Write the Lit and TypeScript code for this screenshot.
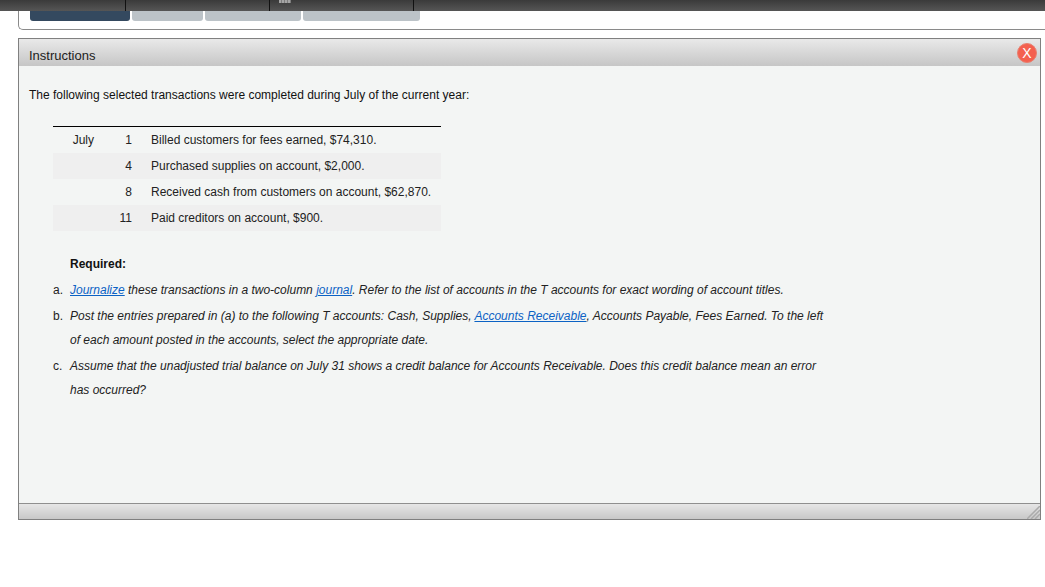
import {css, html, LitElement} from "lit";
import {customElement} from "lit/decorators.js";

const rows = [
    {month: "July", day: "1", text: "Billed customers for fees earned, $74,310."},
    {month: "", day: "4", text: "Purchased supplies on account, $2,000."},
    {month: "", day: "8", text: "Received cash from customers on account, $62,870."},
    {month: "", day: "11", text: "Paid creditors on account, $900."},
];

@customElement("app-root")
class AppRoot extends LitElement {
    static styles = css`
    :host {
        display: block;
        width: 1045px;
        height: 587px;
        overflow: hidden;
        background: #fff;
        font-family: "Liberation Sans", Arial, sans-serif;
        font-size: 12px;
        color: #111;
    }

    .topbar {
        height: 11px;
        display: flex;
        background: linear-gradient(#3a3a3a, #565656);
    }

    .topbar div {
        box-sizing: border-box;
        width: 144px;
        height: 11px;
        border-right: 1px solid #111;
    }

    .topbar .first {
        width: 126px;
    }

    .topbar .calendar {
        padding-left: 9px;
    }

    .cal {
        display: block;
        width: 12px;
        height: 3px;
        background: repeating-linear-gradient(90deg, #a5a5a5 0 2px, #7d7d7d 2px 3px);
    }

    .panel {
        box-sizing: border-box;
        height: 19px;
        margin-left: 18px;
        padding-left: 11px;
        display: flex;
        gap: 2px;
        align-items: flex-start;
        border-left: 1px solid #8a8a8a;
        border-bottom: 1px solid #8a8a8a;
        border-bottom-left-radius: 5px;
    }

    .tab {
        height: 10px;
        background: #bcc3c8;
        border-radius: 0 0 3px 3px;
    }

    .tab.active {
        background: #34495f;
    }

    .dialog {
        box-sizing: border-box;
        width: 1023px;
        height: 482px;
        margin: 8px 0 0 18px;
        border: 1px solid #808080;
        display: flex;
        flex-direction: column;
        background: #f3f5f4;
    }

    .header {
        height: 27px;
        flex: none;
        display: flex;
        align-items: center;
        justify-content: space-between;
        padding: 0 3px 0 10px;
        font-size: 13px;
        color: #1c1c1c;
        background: linear-gradient(#e9e9e9, #c6c6c6);
    }

    .title {
        padding-top: 6px;
    }

    .close {
        box-sizing: border-box;
        width: 20px;
        height: 20px;
        border-radius: 50%;
        background: #f4604f;
        border: 1px solid #e8806f;
        color: #fff;
        font-size: 14px;
        line-height: 18px;
        text-align: center;
    }

    .body {
        flex: 1;
        padding: 22px 0 0 10px;
    }

    .intro {
        margin: 0;
        line-height: 14px;
    }

    table {
        width: 388px;
        margin: 24px 0 0 24px;
        border-collapse: collapse;
        border-top: 1px solid #000;
        color: #222;
    }

    td {
        height: 26px;
        padding: 0;
    }

    tr:nth-child(even) td {
        background: #efefef;
    }

    .month {
        width: 41px;
        text-align: right;
    }

    .day {
        width: 38px;
        text-align: right;
    }

    .text {
        padding-left: 19px;
    }

    .required {
        margin: 20px 0 1px 41px;
        line-height: 26px;
        font-weight: bold;
    }

    .items {
        margin: 0;
        padding: 0;
        list-style: none;
    }

    .items li {
        display: flex;
        width: 805px;
        line-height: 24px;
        margin-bottom: 2px;
    }

    .marker {
        width: 41px;
        flex: none;
        box-sizing: border-box;
        padding-left: 24px;
        color: #222;
    }

    .copy {
        font-style: italic;
        color: #222;
    }

    .copy a {
        color: #0b62c4;
        text-decoration: underline;
    }

    .footer {
        height: 15px;
        flex: none;
        position: relative;
        border-top: 1px solid #8f8f8f;
        background: linear-gradient(#e6e6e6, #c8c8c8);
    }

    .grip {
        position: absolute;
        right: 0;
        bottom: 0;
    }
    `

    render() {
        return html`
            <div class="topbar">
                <div class="first"></div>
                <div></div>
                <div class="calendar"><span class="cal"></span></div>
            </div>
            <div class="panel">
                <div class="tab active" style="width: 100px"></div>
                <div class="tab" style="width: 71px"></div>
                <div class="tab" style="width: 96px"></div>
                <div class="tab" style="width: 117px"></div>
            </div>
            <div class="dialog">
                <div class="header">
                    <span class="title">Instructions</span>
                    <div class="close">X</div>
                </div>
                <div class="body">
                    <p class="intro">The following selected transactions were completed during July of the current year:</p>
                    <table>
                        ${rows.map(r => html`
                            <tr>
                                <td class="month">${r.month}</td>
                                <td class="day">${r.day}</td>
                                <td class="text">${r.text}</td>
                            </tr>
                        `)}
                    </table>
                    <div class="required">Required:</div>
                    <ul class="items">
                        <li>
                            <span class="marker">a.</span>
                            <span class="copy"><a href="#">Journalize</a> these transactions in a two-column <a href="#">journal</a>. Refer to the list of accounts in the T accounts for exact wording of account titles.</span>
                        </li>
                        <li>
                            <span class="marker">b.</span>
                            <span class="copy">Post the entries prepared in (a) to the following T accounts: Cash, Supplies, <a href="#">Accounts Receivable</a>, Accounts Payable, Fees Earned. To the left of each amount posted in the accounts, select the appropriate date.</span>
                        </li>
                        <li>
                            <span class="marker">c.</span>
                            <span class="copy">Assume that the unadjusted trial balance on July 31 shows a credit balance for Accounts Receivable. Does this credit balance mean an error has occurred?</span>
                        </li>
                    </ul>
                </div>
                <div class="footer">
                    <svg class="grip" width="13" height="13" viewBox="0 0 13 13">
                        <path d="M0 13L13 0M4 13L13 4M8 13L13 8" stroke="#ababab" stroke-width="1.5" fill="none"/>
                    </svg>
                </div>
            </div>
        `
    }
}
